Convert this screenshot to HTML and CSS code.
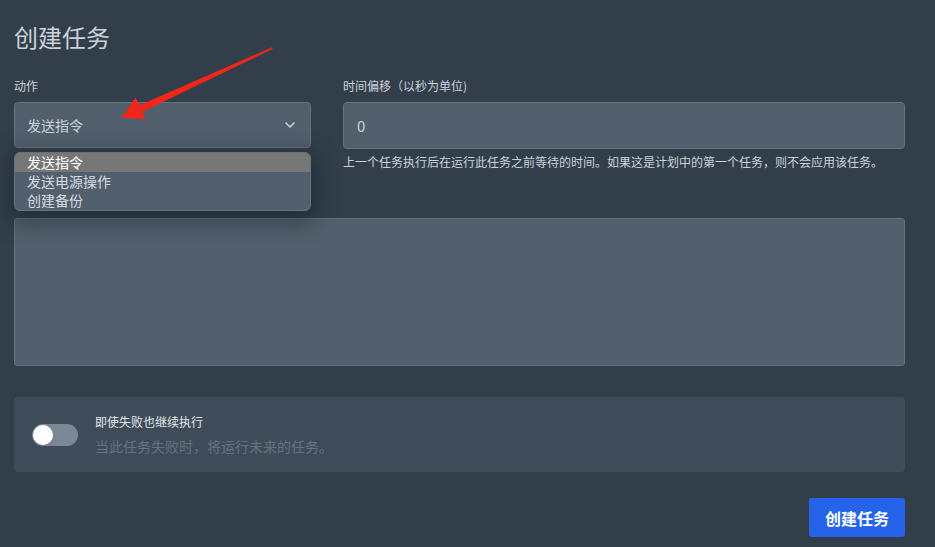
FILE: index.html
```html
<!DOCTYPE html>
<html lang="zh-CN">
<head>
<meta charset="utf-8">
<title>创建任务</title>
<link rel="stylesheet" href="styles.css">
</head>
<body>
<div class="page">
  <h2 class="title">创建任务</h2>

  <div class="row">
    <div class="field">
      <label class="label">动作</label>
      <div class="select-wrap">
        <div class="select">
          <span>发送指令</span>
          <svg class="chevron" width="10" height="6" viewBox="0 0 10 6"><path d="M1 1l4 4 4-4" fill="none" stroke="#cbd2d9" stroke-width="1.6" stroke-linecap="round" stroke-linejoin="round"/></svg>
        </div>
        <ul class="dropdown">
          <li class="opt active">发送指令</li>
          <li class="opt">发送电源操作</li>
          <li class="opt">创建备份</li>
        </ul>
      </div>
    </div>
    <div class="field">
      <label class="label">时间偏移（以秒为单位)</label>
      <div class="input">0</div>
      <p class="help">上一个任务执行后在运行此任务之前等待的时间。如果这是计划中的第一个任务，则不会应用该任务。</p>
    </div>
  </div>

  <div class="payload">
    <div class="textarea"></div>
  </div>

  <div class="switch-card">
    <div class="toggle"><span class="knob"></span></div>
    <div class="switch-text">
      <div class="switch-title">即使失败也继续执行</div>
      <div class="switch-desc">当此任务失败时，将运行未来的任务。</div>
    </div>
  </div>

  <div class="actions">
    <button class="btn">创建任务</button>
  </div>

  <svg class="annot" width="935" height="547" viewBox="0 0 935 547">
    <polygon points="272,47.3 139.5,105.3 135.5,97.5 121.5,117.5 145.5,119.5 142.5,111.8 272.6,49" fill="#f0261b"/>
  </svg>
</div>
</body>
</html>
```

FILE: styles.css
```css
* { box-sizing: border-box; }
html, body {
  margin: 0;
  padding: 0;
  background: #323f4b;
}
body {
  font-family: "Noto Sans CJK SC", "Noto Sans", "Liberation Sans", sans-serif;
  color: #cbd2d9;
}
.page {
  position: relative;
  width: 935px;
  height: 547px;
  padding: 20px 30px 0 14px;
  overflow: hidden;
}
.title {
  margin: 0;
  font-size: 24px;
  line-height: 34px;
  font-weight: 400;
  color: #cbd2d9;
}
.row {
  display: grid;
  grid-template-columns: 297px 1fr;
  column-gap: 32px;
  margin-top: 24px;
}
.field { display: flex; flex-direction: column; }
.label {
  display: block;
  font-size: 12px;
  line-height: 16px;
  color: #cbd2d9;
  margin-bottom: 8px;
}
.select-wrap { position: relative; }
.select {
  height: 46px;
  display: flex;
  align-items: center;
  justify-content: space-between;
  padding: 0 15px 0 12px;
  background: #52606d;
  border: 1px solid #66737f;
  border-radius: 4px;
  font-size: 14px;
  color: #cbd2d9;
}
.chevron { display: block; }
.dropdown {
  position: absolute;
  top: 50px;
  left: 0;
  width: 297px;
  margin: 0;
  padding: 0;
  list-style: none;
  background: #52606d;
  border: 1px solid #66737f;
  border-radius: 6px;
  overflow: hidden;
  box-shadow: 0 6px 22px 6px rgba(20, 28, 36, 0.45);
  z-index: 5;
}
.opt {
  height: 19px;
  line-height: 19px;
  padding-left: 12px;
  font-size: 14px;
  color: #d5dbe1;
}
.opt.active {
  background: #777777;
  color: #ffffff;
}
.input {
  height: 47px;
  display: flex;
  align-items: center;
  padding: 0 13px;
  background: #52606d;
  border: 1px solid #66737f;
  border-radius: 4px;
  font-size: 15px;
  color: #cbd2d9;
}
.help {
  margin: 5px 0 0;
  font-size: 12px;
  line-height: 16px;
  color: #cbd2d9;
  white-space: nowrap;
}
.payload { margin-top: 48px; }
.textarea {
  height: 148px;
  background: #52606d;
  border: 1px solid #66737f;
  border-radius: 3px;
}
.switch-card {
  margin-top: 31px;
  height: 75px;
  background: #3e4c59;
  border-radius: 4px;
  display: flex;
  align-items: center;
  padding-left: 18px;
  gap: 17px;
}
.toggle {
  position: relative;
  width: 46px;
  height: 22px;
  border-radius: 11px;
  background: #7b8794;
  flex: none;
}
.knob {
  position: absolute;
  left: 1px;
  top: 1px;
  width: 20px;
  height: 20px;
  border-radius: 50%;
  background: #ffffff;
}
.switch-text { display: flex; flex-direction: column; gap: 6px; }
.switch-title {
  font-size: 12px;
  line-height: 16px;
  color: #e4e7eb;
}
.switch-desc {
  font-size: 14px;
  line-height: 20px;
  color: #65727f;
}
.actions {
  display: flex;
  justify-content: flex-end;
  margin-top: 26px;
}
.btn {
  height: 39px;
  width: 96px;
  border: none;
  border-radius: 3px;
  background: #2563eb;
  color: #ffffff;
  font-family: "Noto Sans CJK SC", "Noto Sans", sans-serif;
  font-size: 16px;
  font-weight: 700;
  padding: 0;
}
.annot {
  position: absolute;
  left: 0;
  top: 0;
  pointer-events: none;
  z-index: 10;
}
```
